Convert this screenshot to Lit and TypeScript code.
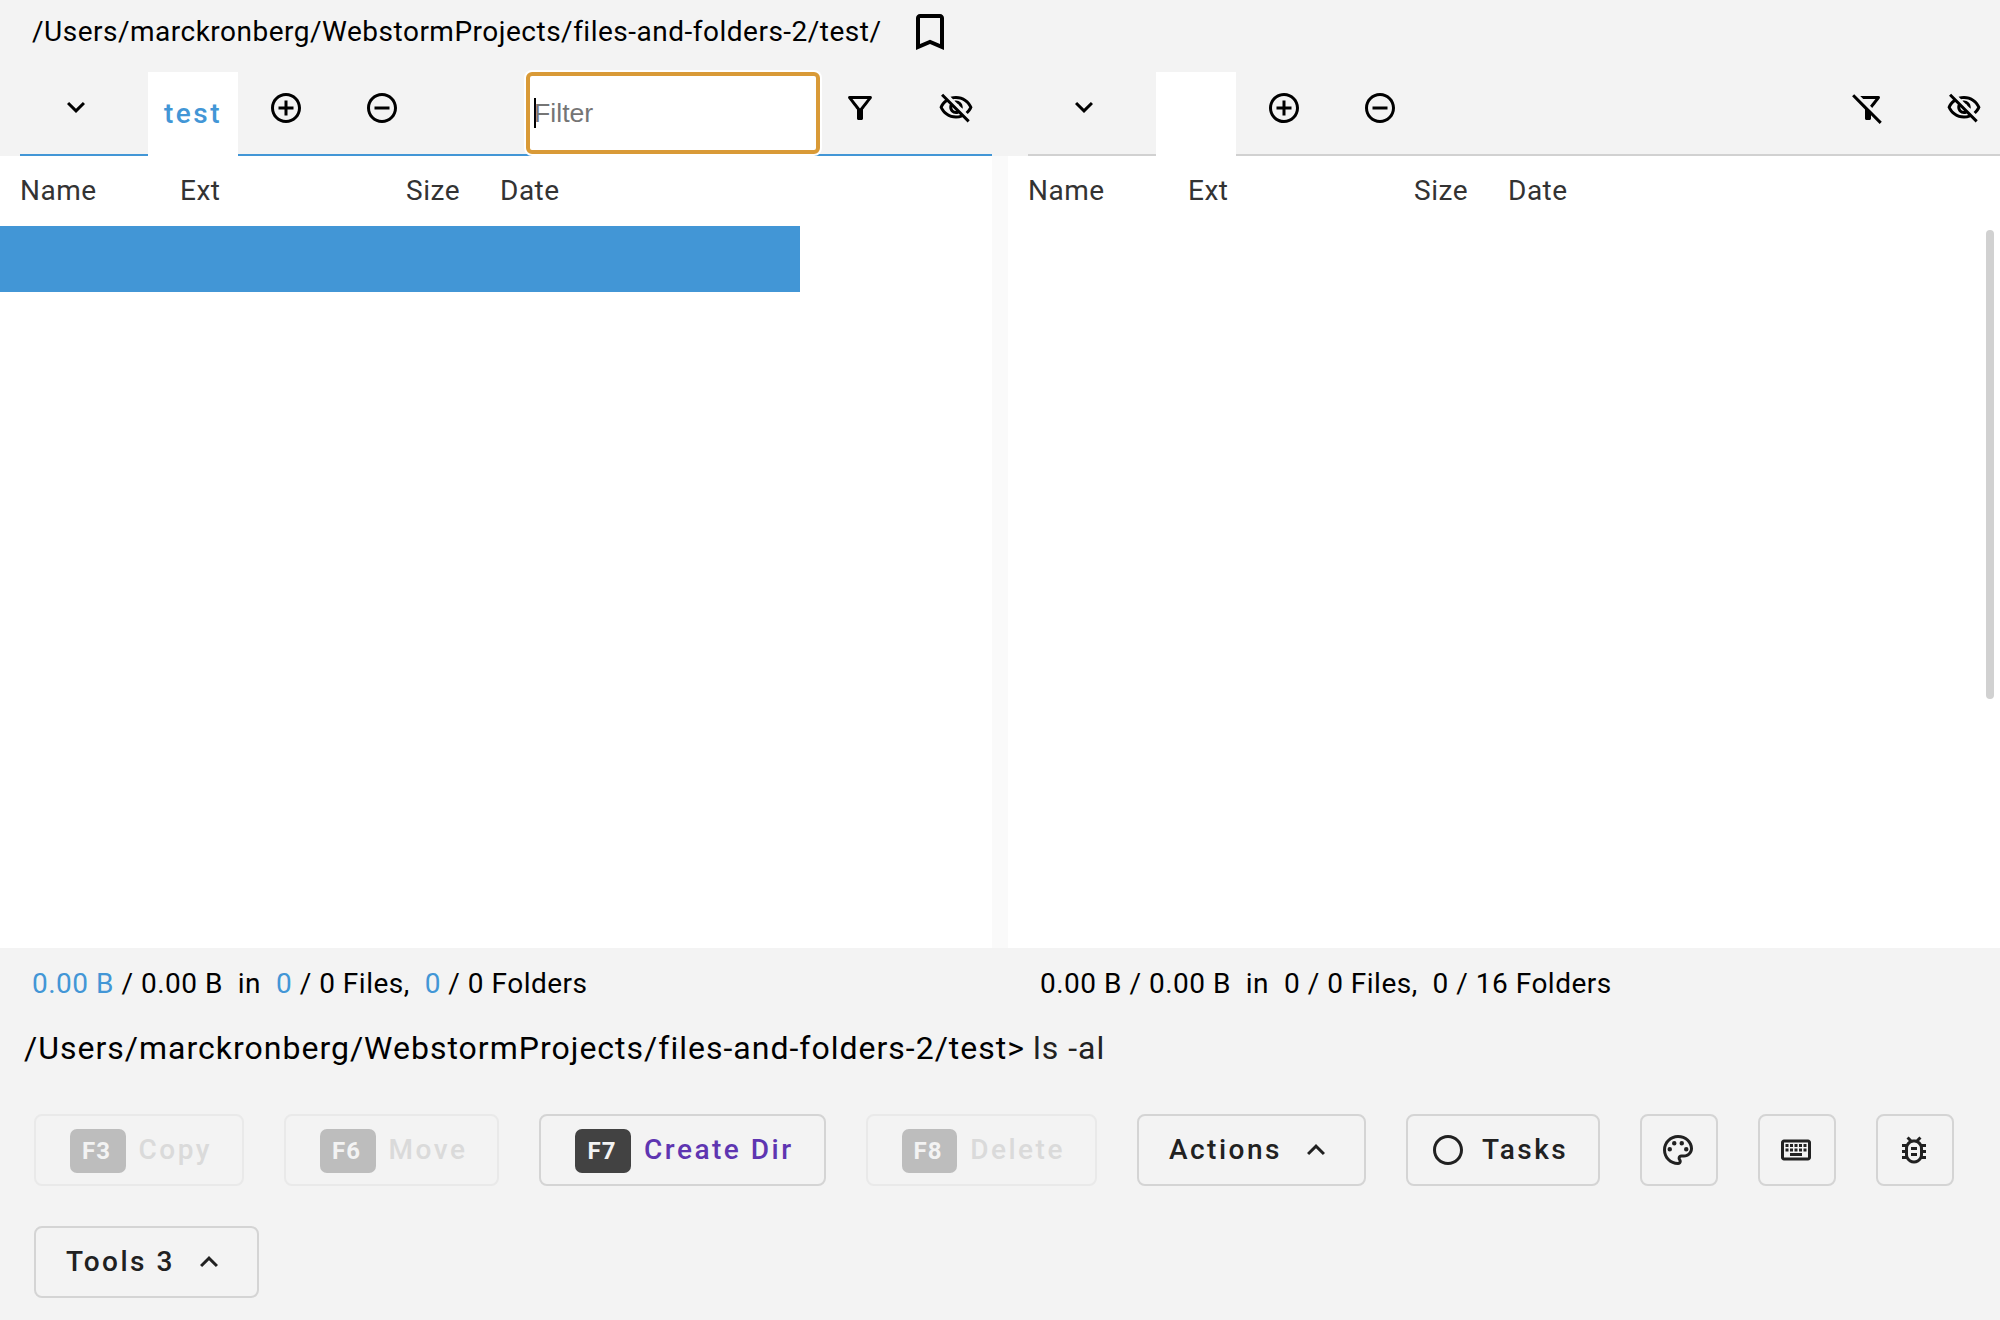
import { LitElement, html, css, svg, nothing } from "lit";
import { customElement, property } from "lit/decorators.js";

const ICONS: Record<string, string> = {
  down: "M7.41 8.59 12 13.17l4.59-4.58L18 10l-6 6-6-6 1.41-1.41z",
  up: "M7.41 15.41 12 10.83l4.59 4.58L18 14l-6-6-6 6 1.41 1.41z",
  add: "M13 7h-2v4H7v2h4v4h2v-4h4v-2h-4V7zm-1-5C6.48 2 2 6.48 2 12s4.48 10 10 10 10-4.48 10-10S17.52 2 12 2zm0 18c-4.41 0-8-3.59-8-8s3.59-8 8-8 8 3.59 8 8-3.59 8-8 8z",
  remove: "M7 11v2h10v-2H7zm5-9C6.48 2 2 6.48 2 12s4.48 10 10 10 10-4.48 10-10S17.52 2 12 2zm0 18c-4.41 0-8-3.59-8-8s3.59-8 8-8 8 3.59 8 8-3.59 8-8 8z",
  bookmark: "M17 3H7c-1.1 0-2 .9-2 2v16l7-3 7 3V5c0-1.1-.9-2-2-2zm0 15-5-2.18L7 18V5h10v13z",
  filter: "M7 6h10l-5.01 6.3L7 6zm-2.75-.39C6.27 8.2 10 13 10 13v6c0 .55.45 1 1 1h2c.55 0 1-.45 1-1v-6s3.72-4.8 5.74-7.39c.51-.66.04-1.61-.79-1.61H5.04c-.83 0-1.3.95-.79 1.61z",
  filterOff: "M16.95 6l-3.57 4.55 1.43 1.43c1.03-1.31 4.98-6.37 4.98-6.37.51-.66.04-1.61-.79-1.61H6.83l2 2h8.12zM2.81 2.81 1.39 4.22 10 13v6c0 .55.45 1 1 1h2c.55 0 1-.45 1-1v-2.17l5.78 5.78 1.41-1.41L2.81 2.81z",
  eyeOff: "M12 6c3.79 0 7.17 2.13 8.82 5.5-.59 1.22-1.42 2.27-2.41 3.12l1.41 1.41c1.39-1.23 2.49-2.77 3.18-4.53C21.27 7.11 17 4 12 4c-1.27 0-2.49.2-3.64.57l1.65 1.65C10.66 6.09 11.32 6 12 6zm-1.07 1.14L13 9.21c.57.25 1.03.71 1.28 1.28l2.07 2.07c.08-.34.14-.7.14-1.07C16.5 9.01 14.48 7 12 7c-.37 0-.72.05-1.07.14zM2.01 3.87l2.68 2.68C3.06 7.83 1.77 9.53 1 11.5 2.73 15.89 7 19 12 19c1.52 0 2.98-.29 4.32-.82l3.42 3.42 1.41-1.41L3.42 2.45 2.01 3.87zm7.5 7.5 2.61 2.61c-.04.01-.08.02-.12.02-1.38 0-2.5-1.12-2.5-2.5 0-.05.01-.08.01-.13zm-3.4-3.4 1.75 1.75c-.23.55-.36 1.15-.36 1.78 0 2.48 2.02 4.5 4.5 4.5.63 0 1.23-.13 1.77-.36l.98.98c-.88.24-1.8.38-2.75.38-3.79 0-7.17-2.13-8.82-5.5.7-1.43 1.72-2.61 2.93-3.53z",
  circle: "M12 2C6.48 2 2 6.48 2 12s4.48 10 10 10 10-4.48 10-10S17.52 2 12 2zm0 18c-4.42 0-8-3.58-8-8s3.58-8 8-8 8 3.58 8 8-3.58 8-8 8z",
  palette: "M12 22C6.49 22 2 17.51 2 12S6.49 2 12 2s10 4.04 10 9c0 3.31-2.69 6-6 6h-1.77c-.28 0-.5.22-.5.5 0 .12.05.23.13.33.41.47.64 1.06.64 1.67 0 1.38-1.12 2.5-2.5 2.5zm0-18c-4.41 0-8 3.59-8 8s3.59 8 8 8c.28 0 .5-.22.5-.5 0-.16-.08-.28-.14-.35-.41-.46-.63-1.05-.63-1.65 0-1.38 1.12-2.5 2.5-2.5H16c2.21 0 4-1.79 4-4 0-3.86-3.59-7-8-7zM5 11.5a1.5 1.5 0 1 0 3 0 1.5 1.5 0 1 0-3 0zM8 7.5a1.5 1.5 0 1 0 3 0 1.5 1.5 0 1 0-3 0zM13 7.5a1.5 1.5 0 1 0 3 0 1.5 1.5 0 1 0-3 0zM16 11.5a1.5 1.5 0 1 0 3 0 1.5 1.5 0 1 0-3 0z",
  keyboard: "M20 7v10H4V7h16m0-2H4c-1.1 0-1.99.9-1.99 2L2 17c0 1.1.9 2 2 2h16c1.1 0 2-.9 2-2V7c0-1.1-.9-2-2-2zm-9 3h2v2h-2V8zm0 3h2v2h-2v-2zM8 8h2v2H8V8zm0 3h2v2H8v-2zm-3 0h2v2H5v-2zm0-3h2v2H5V8zm3 6h8v2H8v-2zm6-3h2v2h-2v-2zm0-3h2v2h-2V8zm3 3h2v2h-2v-2zm0-3h2v2h-2V8z",
  bug: "M20 8h-2.81c-.45-.78-1.07-1.45-1.82-1.96L17 4.41 15.59 3l-2.17 2.17C12.96 5.06 12.49 5 12 5s-.96.06-1.41.17L8.41 3 7 4.41l1.62 1.63C7.88 6.55 7.26 7.22 6.81 8H4v2h2.09c-.05.33-.09.66-.09 1v1H4v2h2v1c0 .34.04.67.09 1H4v2h2.81c1.04 1.79 2.97 3 5.19 3s4.15-1.21 5.19-3H20v-2h-2.09c.05-.33.09-.66.09-1v-1h2v-2h-2v-1c0-.34-.04-.67-.09-1H20V8zm-4 4v3c0 .22-.03.47-.07.7l-.1.65-.37.65c-.72 1.24-2.04 2-3.46 2s-2.74-.77-3.46-2l-.37-.64-.1-.65C8.03 15.48 8 15.23 8 15v-4c0-.23.03-.48.07-.7l.1-.65.37-.65c.3-.52.72-.97 1.21-1.31l.57-.39.74-.18c.31-.08.63-.12.94-.12.32 0 .63.04.95.12l.68.16.61.42c.5.34.91.78 1.21 1.31l.38.65.1.65c.04.22.07.47.07.69v1zm-6 2h4v2h-4zm0-4h4v2h-4z",
};

const icon = (name: string, cls = "icon") =>
  html`<svg class=${cls} viewBox="0 0 24 24" aria-hidden="true">${svg`<path d=${ICONS[name]}></path>`}</svg>`;

@customElement("file-pane")
class FilePane extends LitElement {
  @property() tab = "";
  @property({ type: Boolean, reflect: true }) active = false;

  static styles = css`
    :host { display: flex; flex-direction: column; min-width: 0; --line: #d1d1d1; }
    :host([active]) { --line: #4296d6; }
    .tabs {
      height: 82px; margin-left: 20px; display: flex; flex: none;
      background: #f3f3f3; border-bottom: 2px solid var(--line);
    }
    .icon { width: 36px; height: 36px; fill: #000; display: block; flex: none; }
    .btn { width: 96px; height: 72px; display: flex; align-items: center; justify-content: center; flex: none; }
    .menu { width: 128px; box-sizing: border-box; padding: 0 16px 2px 0; }
    .eye { width: 84px; box-sizing: border-box; padding-left: 12px; }
    .tab {
      height: 84px; min-width: 80px; box-sizing: border-box; padding: 25px 16px 0; background: #fff;
      color: #4296d6; font-weight: 500; line-height: 34px; letter-spacing: 2.5px;
    }
    .grow { flex: 1; }
    .filter {
      width: 294px; height: 82px; box-sizing: border-box; border: 4px solid #d99a37; border-radius: 6px;
      box-shadow: 0 0 0 2px #fff; background: #fff; display: flex; align-items: center;
      padding: 0 0 0 4px; font-family: "Liberation Sans", Arial, sans-serif; font-size: 26.67px;
      letter-spacing: 0; color: #757575; flex: none; margin-right: -8px;
    }
    .caret { width: 2px; height: 30px; background: #000; margin-right: -2px; }
    .list { flex: 1; background: #fff; display: flex; }
    .rows { flex: 1; }
    .head {
      height: 70px; display: grid; grid-template-columns: 160px 280px 40px 1fr; padding-left: 20px;
      box-sizing: border-box; line-height: 70px; color: #333;
    }
    .head .date { grid-column: 4; }
    .head .ext { display: flex; justify-content: space-between; }
    .row { width: 800px; height: 66px; background: #4296d6; }
    .scroll { width: 8px; height: 469px; margin: 74px 6px 0 0; border-radius: 4px; background: #d1d1d1; }
  `;

  render() {
    return html`
      <div class="tabs">
        <div class="btn menu">${icon("down")}</div>
        <div class="tab">${this.tab}</div>
        <div class="btn">${icon("add")}</div>
        <div class="btn">${icon("remove")}</div>
        <div class="grow"></div>
        ${this.active ? html`<div class="filter"><i class="caret"></i><span>Filter</span></div>` : nothing}
        <div class="btn">${icon(this.active ? "filter" : "filterOff")}</div>
        <div class="btn eye">${icon("eyeOff")}</div>
      </div>
      <div class="list">
        <div class="rows">
          <div class="head">
            <span>Name</span>
            <span class="ext"><span>Ext</span><span>Size</span></span>
            <span class="date">Date</span>
          </div>
          ${this.active ? html`<div class="row"></div>` : nothing}
        </div>
        ${this.active ? nothing : html`<div class="scroll"></div>`}
      </div>
    `;
  }
}

@customElement("app-root")
class AppRoot extends LitElement {
  static styles = css`
    :host {
      display: flex; flex-direction: column; width: 2000px; height: 1320px; overflow: hidden;
      background: #f3f3f3; color: #000; font: 400 28px Roboto, sans-serif; letter-spacing: 0.5px;
    }
    .icon { width: 36px; height: 36px; fill: currentColor; display: block; flex: none; }
    .path { height: 72px; display: flex; flex: none; padding-left: 32px; box-sizing: border-box; }
    .path span { line-height: 63px; width: 874px; white-space: nowrap; }
    .mark { width: 48px; height: 48px; margin-top: 8px; }
    .panes {
      height: 876px; display: grid; grid-template-columns: 992px 992px; column-gap: 16px; flex: none;
      background: linear-gradient(#f3f3f3 84px, #fafafa 84px);
    }
    .status {
      display: grid; grid-template-columns: 1008px 1fr; line-height: 72px; height: 70px;
      flex: none; white-space: pre;
    }
    .status div { padding-left: 32px; }
    .status b { font-weight: 400; color: #4296d6; }
    .shell { font-size: 32px; line-height: 60px; height: 60px; padding-left: 24px; white-space: pre; flex: none; letter-spacing: 1px; }
    .cmd { color: #222; margin-left: -1px; }
    .bar { display: flex; flex-wrap: wrap; gap: 40px; padding: 36px 34px 0; }
    .button {
      height: 72px; box-sizing: border-box; border: 2px solid #d4d4d4; border-radius: 8px; padding: 0 30px;
      display: flex; align-items: center; font-weight: 500; letter-spacing: 2.5px; color: #212121; white-space: nowrap;
    }
    .label { margin-top: -2px; }
    .keyed { padding: 0 30px 0 34px; }
    .purple { color: #5e35b1; }
    .off { border-color: #e9e9e9; color: #dadada; }
    .key {
      height: 44px; box-sizing: border-box; padding: 0 14.6px 0 12px; border-radius: 7px; background: #424242; color: #f3f3f3;
      font-size: 24px; font-weight: 700; line-height: 44px; letter-spacing: 1px; margin-right: 13px; margin-top: 2px;
    }
    .off .key { background: #bdbdbd; }
    .square { width: 78px; padding: 0 2px 0 0; justify-content: center; }
    .up { margin-left: 16px; }
    .circle { margin: 0 16px 0 -8px; }
  `;

  private keyed(key: string, label: string, enabled = false) {
    return html`<div class="button keyed ${enabled ? "purple" : "off"}">
      <span class="key">${key}</span><span class="label">${label}</span>
    </div>`;
  }

  render() {
    return html`
      <div class="path"><span>/Users/marckronberg/WebstormProjects/files-and-folders-2/test/</span>${icon("bookmark", "icon mark")}</div>
      <div class="panes">
        <file-pane tab="test" active></file-pane>
        <file-pane></file-pane>
      </div>
      <div class="status">
        <div><b>0.00 B</b> / 0.00 B  in  <b>0</b> / 0 Files,  <b>0</b> / 0 Folders</div>
        <div>0.00 B / 0.00 B  in  0 / 0 Files,  0 / 16 Folders</div>
      </div>
      <div class="shell">/Users/marckronberg/WebstormProjects/files-and-folders-2/test&gt; <span class="cmd">ls -al</span></div>
      <div class="bar">
        ${this.keyed("F3", "Copy")}
        ${this.keyed("F6", "Move")}
        ${this.keyed("F7", "Create Dir", true)}
        ${this.keyed("F8", "Delete")}
        <div class="button"><span class="label">Actions</span>${icon("up", "icon up")}</div>
        <div class="button">${icon("circle", "icon circle")}<span class="label">Tasks</span></div>
        <div class="button square">${icon("palette")}</div>
        <div class="button square">${icon("keyboard")}</div>
        <div class="button square">${icon("bug")}</div>
        <div class="button"><span class="label">Tools 3</span>${icon("up", "icon up")}</div>
      </div>
    `;
  }
}
